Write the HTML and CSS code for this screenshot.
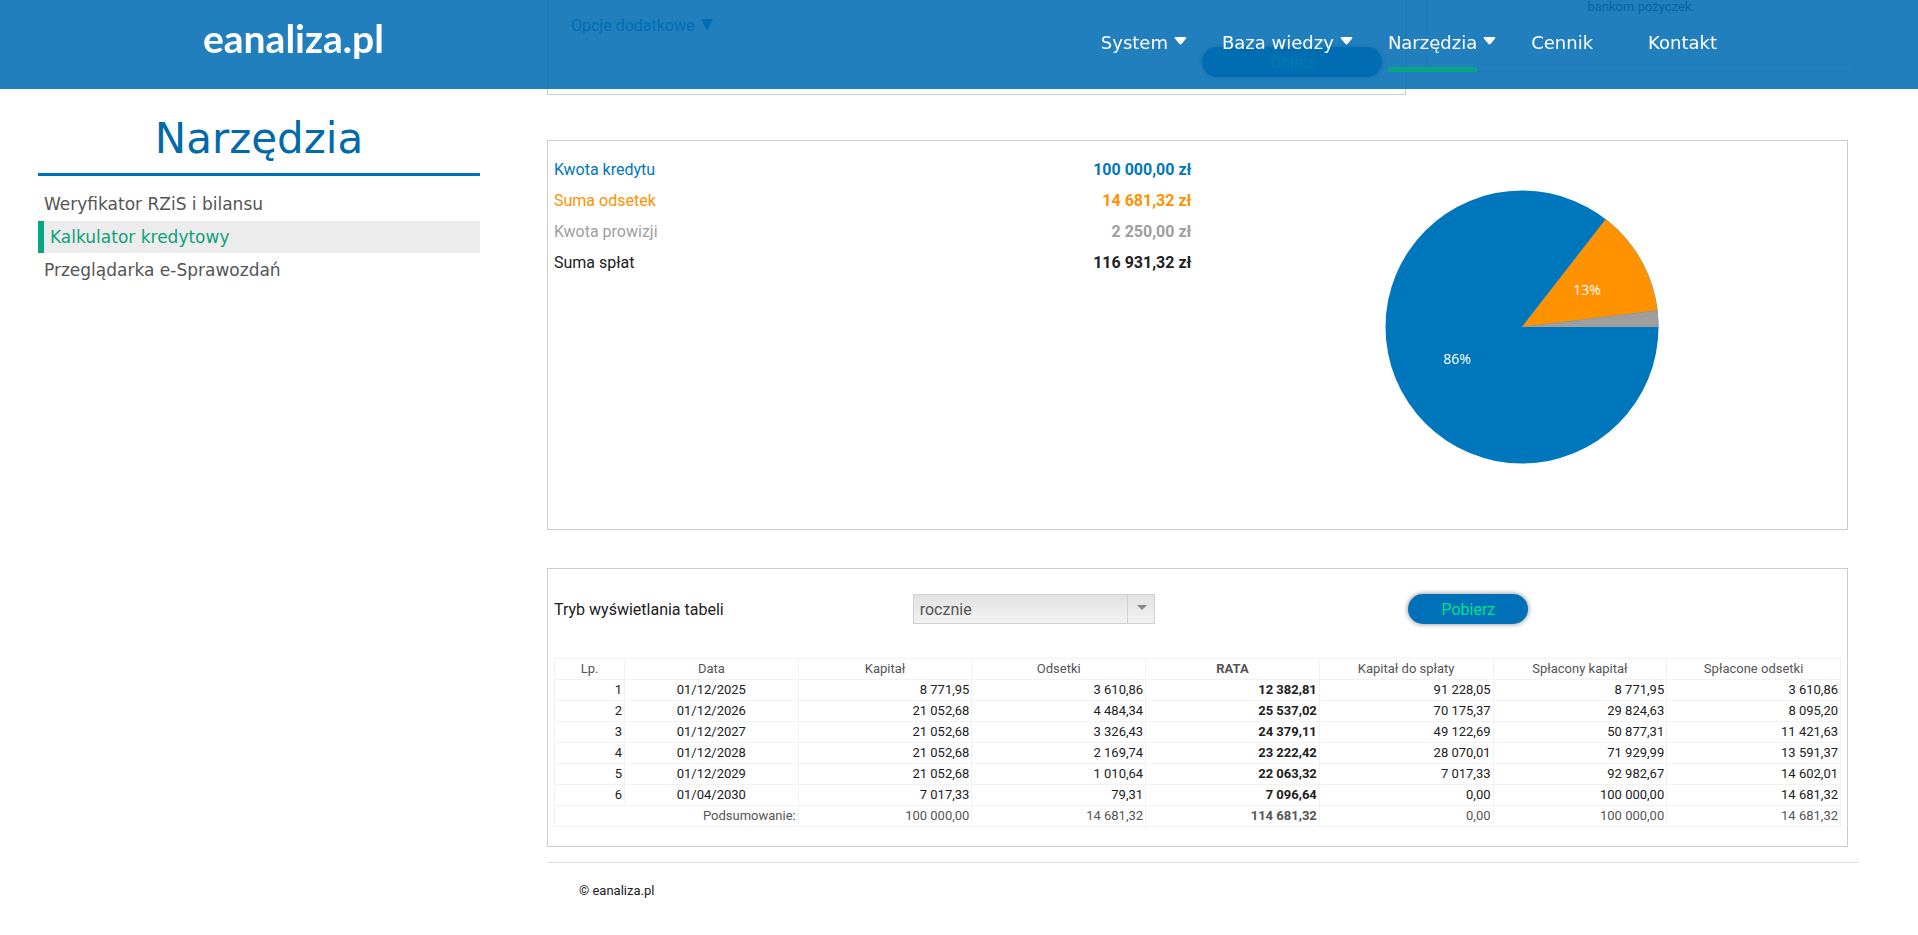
FILE: index.html
```html
<!DOCTYPE html>
<html lang="pl">
  <head>
    <meta charset="UTF-8" />
    <meta name="viewport" content="width=device-width, initial-scale=1.0" />
    <title>Kalkulator kredytowy - eanaliza.pl</title>
    <link rel="stylesheet" href="styles.css">
  </head>
  <body>
    <header class="topbar">
      <a class="logo" href="#">eanaliza.pl</a>
      <nav class="menu">
        <a href="#"><span>System</span><svg class="caret" viewBox="0 0 12 8"><path d="M1 0h10q1.500 .4 .6 1.600L7.200 6.800q-1.200 1.200-2.400 0L.4 1.600Q-.5 .4 1 0z"/></svg></a>
        <a href="#"><span>Baza wiedzy</span><svg class="caret" viewBox="0 0 12 8"><path d="M1 0h10q1.500 .4 .6 1.600L7.200 6.800q-1.200 1.200-2.400 0L.4 1.600Q-.5 .4 1 0z"/></svg></a>
        <a href="#" class="current"><span>Narzędzia</span><svg class="caret" viewBox="0 0 12 8"><path d="M1 0h10q1.500 .4 .6 1.600L7.200 6.800q-1.200 1.200-2.400 0L.4 1.600Q-.5 .4 1 0z"/></svg></a>
        <a href="#" class="plain"><span>Cennik</span></a>
        <a href="#" class="plain"><span>Kontakt</span></a>
      </nav>
    </header>

    <div class="layout">
      <aside class="sidebar">
        <h1>Narzędzia</h1>
        <a href="#">Weryfikator RZiS i bilansu</a>
        <a href="#" class="active">Kalkulator kredytowy</a>
        <a href="#">Przeglądarka e-Sprawozdań</a>
      </aside>

      <main class="content">
        <div class="calc">
          <section class="calc-form">
            <a href="#" class="more">Opcje dodatkowe <svg class="more-arrow" viewBox="0 0 12 12"><path d="M0 0h12L6 12z"/></svg></a>
            <button class="btn btn-wide">Oblicz</button>
          </section>
          <aside class="calc-info">bankom pożyczek.</aside>
        </div>

        <section class="panel summary">
          <dl class="sums">
            <div class="blue"><dt>Kwota kredytu</dt><dd>100 000,00 zł</dd></div>
            <div class="orange"><dt>Suma odsetek</dt><dd>14 681,32 zł</dd></div>
            <div class="grey"><dt>Kwota prowizji</dt><dd>2 250,00 zł</dd></div>
            <div><dt>Suma spłat</dt><dd>116 931,32 zł</dd></div>
          </dl>
          <svg class="pie" viewBox="-150 -150 300 300">
            <circle r="136.500" fill="#0077bd"/>
            <path d="M0 0L83.800 -107.750A136.500 136.500 0 0 1 135.500 -16.470z" fill="#ff9200" stroke="#b5a06a" stroke-width=".5"/>
            <path d="M0 0L135.500 -16.470A136.500 136.500 0 0 1 136.500 0z" fill="#9e9e9e"/>
            <text x="-65" y="37">86%</text>
            <text x="65" y="-32">13%</text>
          </svg>
        </section>

        <section class="panel schedule">
          <div class="tools">
            <label for="mode">Tryb wyświetlania tabeli</label>
            <div class="tools-cell">
              <div class="select">
                <select id="mode">
                  <option>rocznie</option>
                  <option>miesięcznie</option>
                </select>
                <span class="select-arrow"></span>
              </div>
            </div>
            <div class="tools-cell">
              <button class="btn">Pobierz</button>
            </div>
          </div>

          <table>
            <thead>
              <tr><th class="lp">Lp.</th><th>Data</th><th>Kapitał</th><th>Odsetki</th><th class="rata">RATA</th><th>Kapitał do spłaty</th><th>Spłacony kapitał</th><th>Spłacone odsetki</th></tr>
            </thead>
            <tbody>
              <tr><td>1</td><td class="date">01/12/2025</td><td>8 771,95</td><td>3 610,86</td><td class="rata">12 382,81</td><td>91 228,05</td><td>8 771,95</td><td>3 610,86</td></tr>
              <tr><td>2</td><td class="date">01/12/2026</td><td>21 052,68</td><td>4 484,34</td><td class="rata">25 537,02</td><td>70 175,37</td><td>29 824,63</td><td>8 095,20</td></tr>
              <tr><td>3</td><td class="date">01/12/2027</td><td>21 052,68</td><td>3 326,43</td><td class="rata">24 379,11</td><td>49 122,69</td><td>50 877,31</td><td>11 421,63</td></tr>
              <tr><td>4</td><td class="date">01/12/2028</td><td>21 052,68</td><td>2 169,74</td><td class="rata">23 222,42</td><td>28 070,01</td><td>71 929,99</td><td>13 591,37</td></tr>
              <tr><td>5</td><td class="date">01/12/2029</td><td>21 052,68</td><td>1 010,64</td><td class="rata">22 063,32</td><td>7 017,33</td><td>92 982,67</td><td>14 602,01</td></tr>
              <tr><td>6</td><td class="date">01/04/2030</td><td>7 017,33</td><td>79,31</td><td class="rata">7 096,64</td><td>0,00</td><td>100 000,00</td><td>14 681,32</td></tr>
            </tbody>
            <tfoot>
              <tr><td colspan="2">Podsumowanie:</td><td>100 000,00</td><td>14 681,32</td><td class="rata">114 681,32</td><td>0,00</td><td>100 000,00</td><td>14 681,32</td></tr>
            </tfoot>
          </table>
        </section>

        <footer class="footer">© eanaliza.pl</footer>
      </main>
    </div>
  </body>
</html>
```
FILE: styles.css
```css
* {
  box-sizing: border-box;
}
body {
  margin: 0;
  background: white;
  color: #212121;
  font-family: Roboto, sans-serif;
  font-size: 16px;
}
a {
  text-decoration: none;
}

/* top bar */
.topbar {
  position: fixed;
  top: 0;
  left: 0;
  right: 0;
  z-index: 10;
  height: 89px;
  padding: 0 181px 0 203px;
  display: flex;
  align-items: center;
  justify-content: space-between;
  background: rgba(0, 109, 178, 0.875);
}
.logo {
  padding-bottom: 14px;
  color: white;
  font-family: Lato, sans-serif;
  font-size: 39px;
  font-weight: bold;
  line-height: 40px;
}
.menu {
  display: flex;
  gap: 35px;
}
.menu a {
  display: flex;
  align-items: flex-start;
  gap: 6px;
  color: white;
  font-family: "DejaVu Sans", Verdana, sans-serif;
  font-size: 18px;
  line-height: 26px;
}
.menu span {
  height: 42px;
  margin-top: 13px;
  border-bottom: 5px solid transparent;
}
.menu .current span {
  border-color: #06a584;
}
.menu .plain {
  padding-right: 20px;
}
.caret {
  width: 13px;
  height: 8px;
  margin-top: 20px;
  fill: white;
}

.layout {
  display: grid;
  grid-template-columns: 63fr 187fr;
  gap: 67px;
  padding: 0 59px 0 38px;
}

/* left menu */
.sidebar {
  padding-top: 110px;
  font-family: "DejaVu Sans", Verdana, sans-serif;
}
.sidebar h1 {
  margin: 0 0 12px;
  padding-bottom: 5px;
  border-bottom: 3px solid #0070b8;
  color: #006aaa;
  font-size: 42px;
  font-weight: normal;
  line-height: 58px;
  text-align: center;
}
.sidebar a {
  display: block;
  margin-bottom: 1px;
  padding-left: 6px;
  color: #555;
  font-size: 17px;
  line-height: 32px;
}
.sidebar .active {
  border-left: 6px solid #06a584;
  background: #ececec;
  color: #0fa080;
}

/* loan form */
.calc {
  display: grid;
  grid-template-columns: 2fr 1fr;
  align-items: start;
  gap: 20px;
  margin-bottom: 45px;
  padding-right: 3px;
}
.calc-form {
  height: 95px;
  padding: 16px 23px;
  border: 1px solid #ccc;
  border-top: none;
  display: flex;
  flex-direction: column;
}
.more {
  color: #0077bd;
  line-height: 20px;
}
.more-arrow {
  width: 12px;
  height: 12px;
  margin-left: 3px;
  fill: #0077bd;
}
.calc-info {
  height: 72px;
  border: 1px solid #e0e0e0;
  border-top: none;
  color: #333;
  font-size: 13px;
  line-height: 14px;
  text-align: center;
}
.btn {
  width: 120px;
  height: 30px;
  border: none;
  border-radius: 15px;
  background: #0070b8;
  box-shadow: 0 0 4px 1px rgba(0, 0, 0, 0.35);
  color: #00e08a;
  font-family: inherit;
  font-size: 16px;
}
.btn-wide {
  width: 180px;
  margin-top: 11px;
  align-self: flex-end;
}

.panel {
  margin-right: 11px;
  padding: 0 6px;
  border: 1px solid #ccc;
}

/* totals and chart */
.summary {
  display: grid;
  grid-template-columns: 1fr 1fr;
  margin-bottom: 38px;
}
.sums {
  margin: 0;
  padding: 13px 6px 0 0;
}
.sums div {
  display: flex;
  justify-content: space-between;
  line-height: 31px;
}
.sums dd {
  margin: 0;
  font-weight: bold;
}
.blue {
  color: #0077bd;
}
.orange {
  color: #ff9200;
}
.grey {
  color: #9e9e9e;
}
.pie {
  width: 300px;
  height: 300px;
  margin: 36px 0 52px;
  justify-self: center;
  box-sizing: content-box;
  padding-left: 6px;
}
.pie text {
  fill: white;
  font-family: "Open Sans", sans-serif;
  font-size: 14px;
  text-anchor: middle;
}

/* schedule */
.schedule {
  padding-bottom: 19px;
}
.tools {
  display: grid;
  grid-template-columns: 359fr 496fr 433fr;
  align-items: center;
  padding: 25px 0 34px;
}
.select {
  position: relative;
  width: 242px;
}
.select select {
  display: block;
  width: 100%;
  height: 30px;
  padding: 0 6px;
  appearance: none;
  border: 1px solid #d0d0d0;
  border-radius: 0;
  background: linear-gradient(#e2e2e2, #f2f2f2);
  color: #555;
  font-family: inherit;
  font-size: 16px;
}
.select-arrow {
  position: absolute;
  top: 1px;
  right: 1px;
  width: 27px;
  height: 28px;
  border-left: 1px solid #d0d0d0;
  pointer-events: none;
}
.select-arrow::after {
  content: "";
  position: absolute;
  top: 10px;
  left: 9px;
  border: 5px solid transparent;
  border-top-color: #888;
  border-bottom: none;
}
table {
  width: 100%;
  table-layout: fixed;
  border-collapse: collapse;
  font-size: 13px;
}
th,
td {
  height: 21px;
  padding: 0 2px;
  border: 1px solid #f2f2f2;
  line-height: 20px;
  text-align: right;
}
th {
  color: #555;
  font-weight: normal;
  text-align: center;
}
.lp {
  width: 70px;
}
.date {
  text-align: center;
}
.rata {
  font-weight: bold;
}
tfoot {
  color: #555;
}

.footer {
  margin-top: 15px;
  padding: 18px 32px;
  border-top: 1px solid #ddd;
  font-size: 13px;
  line-height: 20px;
}
```
